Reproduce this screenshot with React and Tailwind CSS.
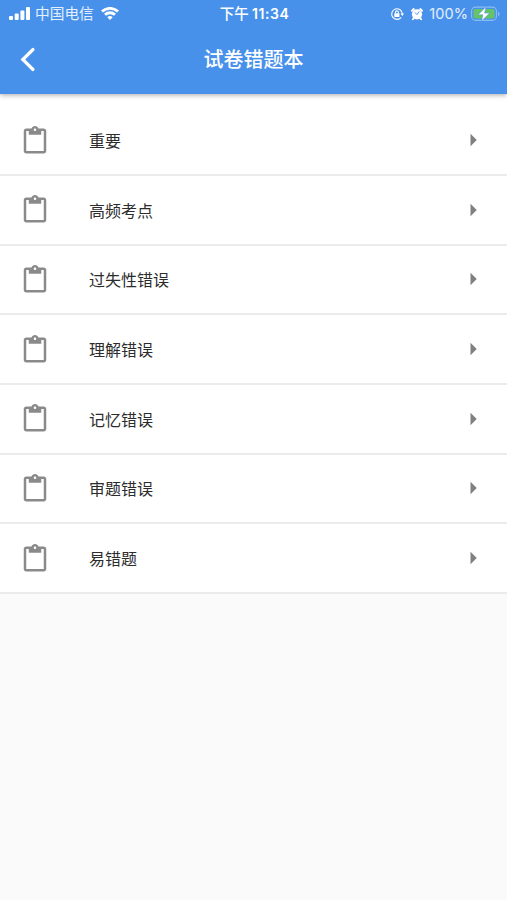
import React from 'react';

const categories = ['重要', '高频考点', '过失性错误', '理解错误', '记忆错误', '审题错误', '易错题'];

function StatusBar() {
    return (
        <div className="grid grid-cols-3 items-center h-[27px] pl-[9px] pr-[7px] text-[14.5px] leading-none">
            <div className="flex items-center text-white/85">
                <svg className="w-[21px] h-[13px] mr-[5px]" viewBox="0 0 21 13" fill="white">
                    <rect x="0" y="9" width="4" height="4" rx="1" />
                    <rect x="5.7" y="6.5" width="4" height="6.5" rx="1" />
                    <rect x="11.4" y="3.5" width="4" height="9.5" rx="1" />
                    <rect x="17" y="0" width="4" height="13" rx="1" />
                </svg>
                <span className="text-[14.7px] whitespace-nowrap">中国电信</span>
                <svg className="w-[18px] h-[13px] ml-[7px] shrink-0" viewBox="0 0 18 13" fill="none" stroke="white" strokeWidth="2.8">
                    <path d="M1 4.6a11.4 11.4 0 0 1 16 0" />
                    <path d="M4 7.8a7.1 7.1 0 0 1 10 0" />
                    <path d="M6.3 10.3a3.8 3.8 0 0 1 5.4 0L9 13z" fill="white" stroke="none" />
                </svg>
            </div>

            <div className="text-center text-white font-medium whitespace-nowrap">
                下午 <span className="font-['Inter'] font-semibold text-[14px] tracking-[0.55px]">11:34</span>
            </div>

            <div className="flex items-center justify-end text-white/85">
                <svg className="w-[14px] h-[14px] mr-[6px]" viewBox="0 0 14 14" fill="none" stroke="white" strokeWidth="1.1">
                    <path d="M11.2 10.3A5.3 5.3 0 1 1 12.3 7" />
                    <path d="M10.5 6.6h3.5l-1.7 2.3z" fill="white" stroke="none" />
                    <rect x="4.3" y="6.2" width="5.2" height="3.8" rx=".5" fill="white" stroke="none" />
                    <path d="M5.4 6.5V5.4a1.5 1.5 0 0 1 3 0v1.1" />
                </svg>
                <svg className="w-[14px] h-[14px] mr-[5px]" viewBox="0 0 14 14" fill="none">
                    <path d="M2 3.8 3.8 2.1M12 3.8 10.2 2.1M3.6 11.2l-.7 1M10.4 11.2l.7 1" stroke="white" strokeWidth="2" strokeLinecap="round" />
                    <circle cx="7" cy="7.3" r="5.1" fill="white" />
                    <path d="M4.8 5.4 7 7.6l2.2-3.2" stroke="#4891eb" strokeWidth=".9" />
                </svg>
                <span className="font-['Inter'] text-[14.5px] tracking-[0.1px] mt-px">100%</span>
                <svg className="w-[29px] h-[16px] ml-[3px]" viewBox="0 0 29 16" fill="none">
                    <rect x=".6" y="1.1" width="24.8" height="13.3" rx="4" stroke="#8dbcf3" strokeWidth="1.1" />
                    <rect x="2.4" y="2.9" width="21.2" height="9.7" rx="2.3" fill="#65c466" />
                    <path d="M27 5.8c2 .7 2 3.7 0 4.4z" fill="#8dbcf3" />
                    <path d="M14.9.9 7 8.8h4.9l-1.3 6.2 8-7.9h-5z" fill="white" stroke="#4891eb" strokeWidth=".5" />
                </svg>
            </div>
        </div>
    );
}

function CategoryRow({ label }) {
    return (
        <li className="flex items-center h-[69.65px] pl-5 pr-[19px] border-b-2 border-[#ebebeb]">
            <svg className="w-[30px] h-[30px] mt-px" viewBox="0 0 24 24" fill="#8a8a8a">
                <path d="M19 2h-4.18C14.4.84 13.3 0 12 0S9.6.84 9.18 2H5c-1.1 0-2 .9-2 2v16c0 1.1.9 2 2 2h14c1.1 0 2-.9 2-2V4c0-1.1-.9-2-2-2zm-7 0c.55 0 1 .45 1 1s-.45 1-1 1-1-.45-1-1 .45-1 1-1zm7 18H5V4h2v3h10V4h2v16z" />
            </svg>
            <span className="flex-1 ml-[39px] text-[16px] text-[#2c2c2c]">{label}</span>
            <svg className="w-[30px] h-[30px]" viewBox="0 0 24 24" fill="#808080">
                <path d="M10 17l5-5-5-5z" />
            </svg>
        </li>
    );
}

export default function App() {
    return (
        <div className="min-h-screen bg-[#fafafa] font-['Noto_Sans_CJK_SC',sans-serif]">
            <header className="relative h-[94px] bg-[#4891eb] shadow-[0_1px_5px_rgba(0,0,0,0.35)]">
                <StatusBar />
                <div className="grid grid-cols-[1fr_auto_1fr] items-center h-[64px]">
                    <button type="button" className="ml-[20px] w-[16px]">
                        <svg className="w-[16px] h-[26px]" viewBox="0 0 16 26" fill="none" stroke="white" strokeWidth="3.2" strokeLinecap="round" strokeLinejoin="miter">
                            <path d="M13 3.5 2.8 13.5 13 23.5" />
                        </svg>
                    </button>
                    <h1 className="text-[20px] leading-none font-medium text-white">试卷错题本</h1>
                </div>
            </header>

            <ul className="bg-white pt-[12.4px]">
                {categories.map(label => (
                    <CategoryRow key={label} label={label} />
                ))}
            </ul>
        </div>
    );
}
